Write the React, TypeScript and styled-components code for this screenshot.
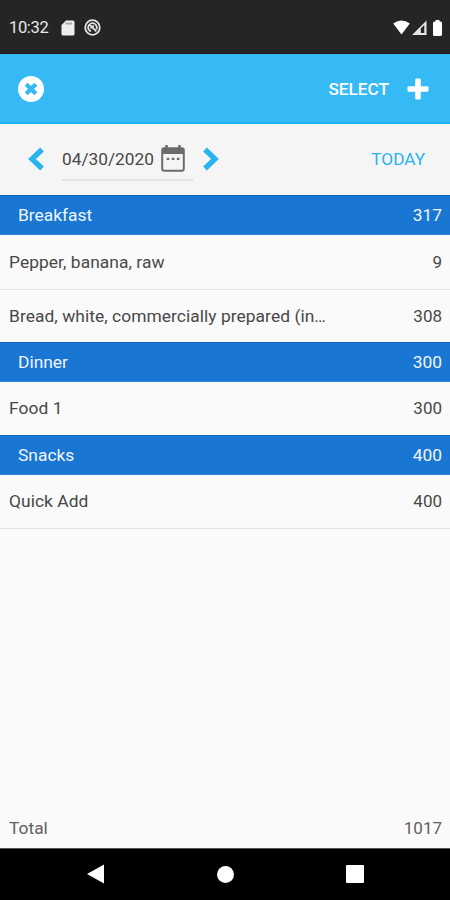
import React from "react";
import styled, { createGlobalStyle } from "styled-components";

const GlobalStyle = createGlobalStyle`
  *, *::before, *::after { box-sizing: border-box; }
  body { margin: 0; background: #fafafa; font-family: Roboto, sans-serif; }
  svg { display: block; flex: none; }
  button { border: 0; padding: 0; background: none; font: inherit; color: inherit; }
`;

const Screen = styled.main`
  display: flex;
  flex-direction: column;
  width: 450px;
  height: 900px;
  overflow: hidden;
  background: #fafafa;
  color: #484848;
  font-size: 17px;
`;

const StatusBar = styled.header`
  display: flex;
  align-items: center;
  justify-content: space-between;
  height: 54px;
  flex: none;
  padding: 2px 8px 0 9px;
  background: #252525;
  border-bottom: 1px solid #211b19;
  color: #e9e9e9;
`;

const StatusGroup = styled.div<{ $gap: number }>`
  display: flex;
  align-items: center;
  gap: ${(p) => p.$gap}px;
`;

const Clock = styled.span`
  width: 43px;
  font-size: 16.5px;
  letter-spacing: -0.35px;
  white-space: nowrap;
`;

const BatterySlot = styled.span`
  margin-left: 4px;
`;

const Toolbar = styled.nav`
  display: flex;
  align-items: center;
  justify-content: space-between;
  height: 70px;
  flex: none;
  padding: 2px 21px 0 18px;
  background: #35baf6;
  border-bottom: 2px solid #1fb2f2;
  color: #fff;
`;

const ToolbarActions = styled.div`
  display: flex;
  align-items: center;
  gap: 18px;
`;

const TextButton = styled.button<{ $accent?: boolean }>`
  font-size: 17.2px;
  font-weight: ${(p) => (p.$accent ? 400 : 500)};
  color: ${(p) => (p.$accent ? "#27b3f0" : "#fff")};
`;

const DateBar = styled.div`
  display: flex;
  align-items: center;
  justify-content: space-between;
  height: 71px;
  flex: none;
  padding: 0 25px 1px 28px;
  background: #f5f5f5;
`;

const DatePicker = styled.div`
  display: flex;
  align-items: center;
`;

const DateField = styled.div`
  display: flex;
  align-items: center;
  justify-content: space-between;
  width: 131px;
  height: 43px;
  margin: 0 9px 0 17px;
  padding: 1px 8px 0 0;
  border-bottom: 2px solid #e3e3e3;
  font-size: 17.3px;
`;

const FoodList = styled.section`
  flex: 1;
`;

const MealHeader = styled.h2`
  display: flex;
  align-items: center;
  justify-content: space-between;
  height: 40px;
  margin: 0;
  padding: 0 8px 0 18px;
  background: #1976d2;
  border-top: 1px solid #1064bd;
  border-bottom: 1px solid #3384d6;
  color: #f1f5ff;
  font-size: 17.4px;
  font-weight: 400;
`;

const FoodRow = styled.div<{ $height: number; $divider?: boolean }>`
  display: flex;
  align-items: center;
  justify-content: space-between;
  height: ${(p) => p.$height}px;
  padding: 0 8px 1px 9px;
  border-bottom: ${(p) => (p.$divider ? "1px solid #e1e1e1" : "0")};
`;

const FoodName = styled.span`
  font-size: 17.4px;
  letter-spacing: 0.05px;
  white-space: nowrap;
`;

const TotalRow = styled.footer`
  display: flex;
  align-items: center;
  justify-content: space-between;
  height: 40px;
  flex: none;
  padding: 0 8px 0 9px;
  color: #606060;
`;

const TotalLabel = styled.span`
  font-size: 17.4px;
`;

const SystemNav = styled.nav`
  display: grid;
  grid-template-columns: repeat(3, 130px);
  justify-content: center;
  height: 52px;
  flex: none;
  padding-bottom: 1px;
  background: #000;
  border-top: 1px solid #555;
`;

const NavButton = styled.button`
  display: flex;
  align-items: center;
  justify-content: center;
`;

const CardIcon = () => (
  <svg width="14" height="16" viewBox="0 0 14 16">
    <path d="M5 .5h7q1.5 0 1.5 1.5v12q0 1.5-1.5 1.5H2Q.5 15.500.5 14V5z" fill="#ededed" />
    <path d="M4.500 3.500h6.500" stroke="#aaa" strokeWidth="2" />
  </svg>
);

const SyncIcon = () => (
  <svg width="17" height="17" viewBox="0 0 17 17" fill="none" stroke="#e2e2e2">
    <circle cx="8.500" cy="8.500" r="7.300" strokeWidth="1.800" />
    <path d="M12.400 10.300A4.300 4.300 0 1 0 7 12.500M5.800 5.800l6.500 6.500M7.200 9.500a1.900 1.900 0 0 1 2.900-2" strokeWidth="1.800" />
  </svg>
);

const WifiIcon = () => (
  <svg width="17" height="15" viewBox="0 0 17 15">
    <path d="M.2 3.500Q8.500-2.700 16.800 3.500L8.500 14.500z" fill="#fff" />
  </svg>
);

const SignalIcon = () => (
  <svg width="15" height="15" viewBox="0 0 15 15">
    <path fillRule="evenodd" d="M0 15L14.500.5V15zM8.800 8.500V13h3.500V5z" fill="#e7e7e7" />
  </svg>
);

const BatteryIcon = () => (
  <svg width="9" height="16" viewBox="0 0 9 16">
    <path d="M2.500 0h4v1.500h1Q9 1.500 9 3v11.500Q9 16 7.500 16h-6Q0 16 0 14.500V3q0-1.500 1.500-1.500h1z" fill="#fff" />
  </svg>
);

const CloseIcon = () => (
  <svg width="26" height="26" viewBox="0 0 26 26">
    <circle cx="13" cy="13" r="13" fill="#fff" />
    <path d="M8.200 8.200l9.600 9.600M17.800 8.200l-9.600 9.600" stroke="#35baf6" strokeWidth="4.300" />
  </svg>
);

const PlusIcon = () => (
  <svg width="22" height="22" viewBox="0 0 22 22" fill="#fff">
    <rect x="8.200" y="0.500" width="5.600" height="21" rx="1.200" />
    <rect x="0.500" y="8.200" width="21" height="5.600" rx="1.200" />
  </svg>
);

const Chevron = ({ next = false }: { next?: boolean }) => (
  <svg width="17" height="24" viewBox="0 0 17 24">
    <path
      d={next ? "M3 2.500L13 12 3 21.500" : "M14 2.500L4 12l10 9.500"}
      fill="none"
      stroke="#29b3ef"
      strokeWidth="5.300"
    />
  </svg>
);

const CalendarIcon = () => (
  <svg width="24" height="27" viewBox="0 0 24 27">
    <path d="M5.500 0v4M18.500 0v4" stroke="#6b6b6b" strokeWidth="2.500" />
    <rect x="1.200" y="3.200" width="21.600" height="22.600" rx="2" fill="none" stroke="#6b6b6b" strokeWidth="2" />
    <path d="M1 3h22v6H1z" fill="#6b6b6b" />
    <path d="M5.700 13.800h2.500M10.800 13.800h2.500M15.900 13.800h2.500" stroke="#6b6b6b" strokeWidth="2.300" />
  </svg>
);

const meals = [
  {
    name: "Breakfast",
    total: 317,
    foods: [
      { name: "Pepper, banana, raw", calories: 9, height: 55, divider: true },
      { name: "Bread, white, commercially prepared (in…", calories: 308, height: 52 },
    ],
  },
  { name: "Dinner", total: 300, foods: [{ name: "Food 1", calories: 300, height: 53 }] },
  { name: "Snacks", total: 400, foods: [{ name: "Quick Add", calories: 400, height: 54, divider: true }] },
];

export default function App() {
  return (
    <>
      <GlobalStyle />
      <Screen>
        <StatusBar>
          <StatusGroup $gap={9}>
            <Clock>10:32</Clock>
            <CardIcon />
            <SyncIcon />
          </StatusGroup>
          <StatusGroup $gap={2}>
            <WifiIcon />
            <SignalIcon />
            <BatterySlot><BatteryIcon /></BatterySlot>
          </StatusGroup>
        </StatusBar>
        <Toolbar>
          <button aria-label="Close"><CloseIcon /></button>
          <ToolbarActions>
            <TextButton>SELECT</TextButton>
            <button aria-label="Add"><PlusIcon /></button>
          </ToolbarActions>
        </Toolbar>
        <DateBar>
          <DatePicker>
            <button aria-label="Previous day"><Chevron /></button>
            <DateField>
              <span>04/30/2020</span>
              <CalendarIcon />
            </DateField>
            <button aria-label="Next day"><Chevron next /></button>
          </DatePicker>
          <TextButton $accent>TODAY</TextButton>
        </DateBar>
        <FoodList>
          {meals.map((meal) => (
            <React.Fragment key={meal.name}>
              <MealHeader>
                <span>{meal.name}</span>
                <span>{meal.total}</span>
              </MealHeader>
              {meal.foods.map((food) => (
                <FoodRow key={food.name} $height={food.height} $divider={food.divider}>
                  <FoodName>{food.name}</FoodName>
                  <span>{food.calories}</span>
                </FoodRow>
              ))}
            </React.Fragment>
          ))}
        </FoodList>
        <TotalRow>
          <TotalLabel>Total</TotalLabel>
          <span>1017</span>
        </TotalRow>
        <SystemNav>
          <NavButton aria-label="Back">
            <svg width="17" height="20" viewBox="0 0 17 20"><path d="M0 10L17 .5v19z" fill="#fff" /></svg>
          </NavButton>
          <NavButton aria-label="Home">
            <svg width="17" height="17" viewBox="0 0 17 17"><circle cx="8.500" cy="8.500" r="8.500" fill="#fff" /></svg>
          </NavButton>
          <NavButton aria-label="Recent apps">
            <svg width="18" height="18" viewBox="0 0 18 18"><rect width="18" height="18" rx="1" fill="#fff" /></svg>
          </NavButton>
        </SystemNav>
      </Screen>
    </>
  );
}
